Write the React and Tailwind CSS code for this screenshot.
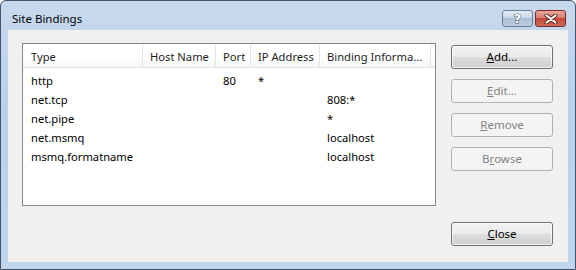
const rows = [
  { type: 'http', host: '', port: '80', ip: '*', info: '' },
  { type: 'net.tcp', host: '', port: '', ip: '', info: '808:*' },
  { type: 'net.pipe', host: '', port: '', ip: '', info: '*' },
  { type: 'net.msmq', host: '', port: '', ip: '', info: 'localhost' },
  { type: 'msmq.formatname', host: '', port: '', ip: '', info: 'localhost' },
];

function Button({ children, disabled }) {
  return (
    <button
      className={
        disabled
          ? 'w-[102px] h-[24px] rounded-[3px] border border-[#adb2b5] bg-[#f4f4f4] text-[#838383] text-[11.5px] leading-none'
          : 'w-[102px] h-[24px] rounded-[3px] border border-[#707070] bg-[linear-gradient(to_bottom,#f2f2f2_0%,#ebebeb_50%,#dddddd_50%,#cfcfcf_100%)] shadow-[inset_0_0_0_1px_rgba(255,255,255,0.7)] text-black text-[11.5px] leading-none'
      }
    >
      {children}
    </button>
  );
}

function Cell({ w, children, last }) {
  return (
    <div className={`${w} shrink-0 h-full flex items-center pt-[4px] pl-[7px] ${last ? '' : 'border-r border-[#e5e5e5]'} whitespace-nowrap overflow-hidden`}>
      {children}
    </div>
  );
}

export default function App() {
  return (
    <div className="w-[576px] h-[270px] bg-white font-['Noto_Sans',sans-serif] text-[11.2px] text-black">
      <div className="w-full h-full rounded-t-[6px] border border-[#43536a] bg-[linear-gradient(to_bottom,#c6d9ee,#bad1ea_40%,#bfd5ec)] flex flex-col">
        {/* title bar */}
        <div className="h-[29px] shrink-0 flex items-start pt-[9px] pl-[11px] pr-[9px]">
          <div className="text-[11.5px] leading-[17px] text-black flex-1">Site Bindings</div>
          <div className="flex gap-[2px]">
            <div className="w-[31px] h-[17px] rounded-[3px] border border-[#6d7f96] bg-[linear-gradient(to_bottom,#e3ebf5_0%,#c9d7e8_45%,#a9bed8_50%,#bccde2_100%)] flex items-center justify-center">
              <span className="font-['DejaVu_Sans',sans-serif] font-bold text-[13px] leading-none text-white [-webkit-text-stroke:1px_#3e4e63] [paint-order:stroke_fill]">?</span>
            </div>
            <div className="w-[31px] h-[17px] rounded-[3px] border border-[#7a2a22] bg-[linear-gradient(to_bottom,#e9a99b_0%,#d67d6c_45%,#c4493a_50%,#d06a55_100%)] flex items-center justify-center">
              <svg width="14" height="10" viewBox="0 0 14 10">
                <path d="M2.5 1.5 L11.5 8.5 M11.5 1.5 L2.5 8.5" stroke="#5a1e18" strokeWidth="4" strokeLinecap="round" />
                <path d="M2.5 1.5 L11.5 8.5 M11.5 1.5 L2.5 8.5" stroke="#ffffff" strokeWidth="2.2" strokeLinecap="round" />
              </svg>
            </div>
          </div>
        </div>

        {/* client area */}
        <div className="flex-1 mx-[7px] mb-[7px] bg-[#f0f0f0] flex flex-col">
          <div className="flex pt-[13px] pl-[14px]">
            <div className="w-[414px] h-[163px] border border-[#828790] bg-white flex flex-col">
              <div className="h-[24px] shrink-0 flex border-b border-[#e5e5e5] bg-[linear-gradient(to_bottom,#ffffff_0%,#ffffff_60%,#f5f6f7_100%)] text-[#1e1e1e]">
                <Cell w="w-[120px]"><span className="pl-[1px]">Type</span></Cell>
                <Cell w="w-[73px]">Host Name</Cell>
                <Cell w="w-[35px]">Port</Cell>
                <Cell w="w-[69px]">IP Address</Cell>
                <Cell w="w-[111px]">Binding Informa...</Cell>
                <Cell w="flex-1" last />
              </div>
              <div className="pt-[4px]">
                {rows.map((r) => (
                  <div key={r.type} className="h-[19px] flex items-center">
                    <div className="w-[120px] pl-[8px]">{r.type}</div>
                    <div className="w-[73px] pl-[7px]">{r.host}</div>
                    <div className="w-[35px] pl-[7px]">{r.port}</div>
                    <div className="w-[69px] pl-[7px]">{r.ip}</div>
                    <div className="w-[111px] pl-[7px]">{r.info}</div>
                  </div>
                ))}
              </div>
            </div>
            <div className="ml-[15px] mt-[2px] flex flex-col gap-[10px]">
              <Button><u>A</u>dd...</Button>
              <Button disabled><u>E</u>dit...</Button>
              <Button disabled><u>R</u>emove</Button>
              <Button disabled>B<u>r</u>owse</Button>
            </div>
          </div>
          <div className="flex justify-end pr-[15px] mt-[16px]">
            <Button><u>C</u>lose</Button>
          </div>
        </div>
      </div>
    </div>
  );
}
